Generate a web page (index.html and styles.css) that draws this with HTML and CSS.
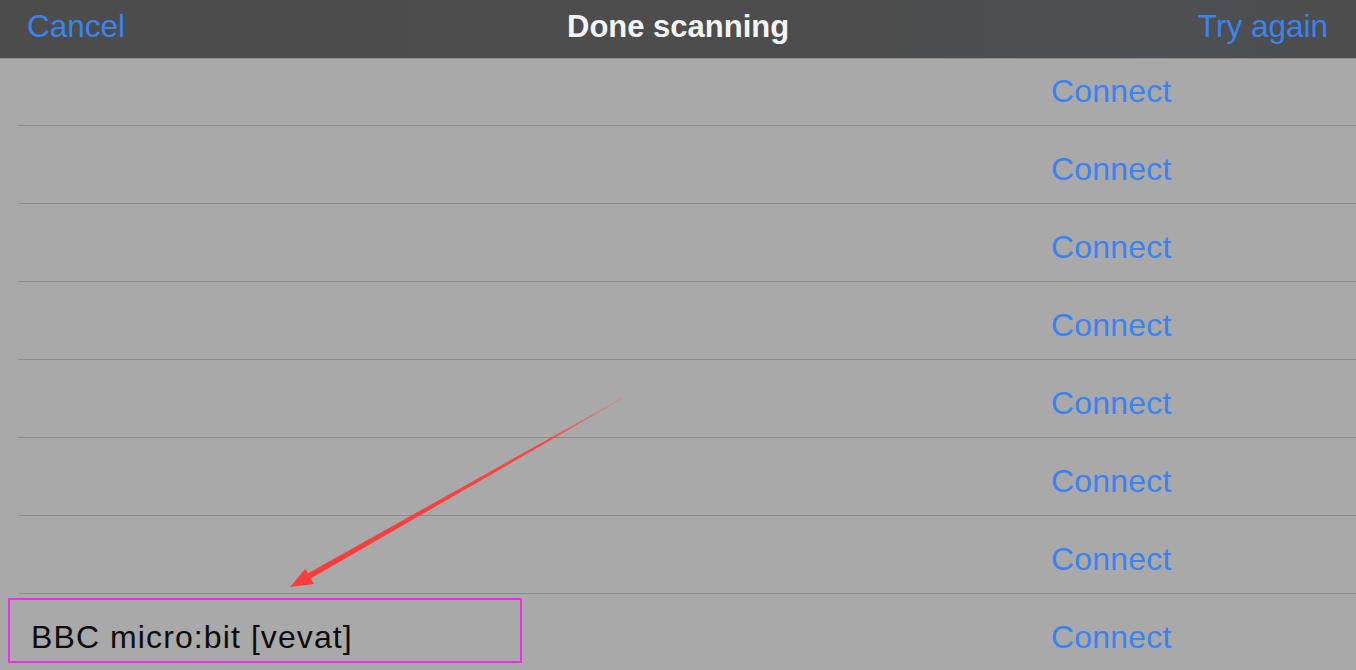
FILE: index.html
```html
<!DOCTYPE html>
<html lang="en">
<head>
<meta charset="utf-8">
<title>Done scanning</title>
<link rel="stylesheet" href="styles.css">
</head>
<body>
<div class="screen">
  <header class="navbar">
    <span class="nav-btn nav-left">Cancel</span>
    <span class="nav-title">Done scanning</span>
    <span class="nav-btn nav-right">Try again</span>
  </header>
  <main class="list">
    <div class="list-inner">
      <div class="row"><div class="row-body"><span class="name"></span><span class="connect">Connect</span></div></div>
      <div class="row"><div class="row-body"><span class="name"></span><span class="connect">Connect</span></div></div>
      <div class="row"><div class="row-body"><span class="name"></span><span class="connect">Connect</span></div></div>
      <div class="row"><div class="row-body"><span class="name"></span><span class="connect">Connect</span></div></div>
      <div class="row"><div class="row-body"><span class="name"></span><span class="connect">Connect</span></div></div>
      <div class="row"><div class="row-body"><span class="name"></span><span class="connect">Connect</span></div></div>
      <div class="row"><div class="row-body"><span class="name"></span><span class="connect">Connect</span></div></div>
      <div class="row"><div class="row-body"><span class="name">BBC micro:bit [vevat]</span><span class="connect">Connect</span></div></div>
    </div>
  </main>
  <div class="highlight"></div>
  <svg class="annot" width="1356" height="670" viewBox="0 0 1356 670">
    <defs>
      <linearGradient id="fade" gradientUnits="userSpaceOnUse" x1="624" y1="398" x2="290" y2="587">
        <stop offset="0" stop-color="#ff3b3b" stop-opacity="0.15"/>
        <stop offset="0.25" stop-color="#ff3b3b" stop-opacity="0.9"/>
        <stop offset="1" stop-color="#ff3b3b" stop-opacity="1"/>
      </linearGradient>
    </defs>
    <polygon fill="url(#fade)" points="290,587 314,584 310.6,578.6 623.3,398.3 622.7,397.5 307.6,573.4 305.5,568.6"/>
  </svg>
</div>
</body>
</html>
```

FILE: styles.css
```css
html, body {
  margin: 0;
  padding: 0;
}
body {
  width: 1356px;
  height: 670px;
  overflow: hidden;
  background: #a9a9a9;
  font-family: "Liberation Sans", Arial, sans-serif;
}
.screen {
  position: relative;
  width: 1356px;
  height: 670px;
  overflow: hidden;
  display: flex;
  flex-direction: column;
}
.navbar {
  box-sizing: border-box;
  height: 59px;
  flex: 0 0 59px;
  background: linear-gradient(90deg, #4c4c4c 0%, #4d4d4d 60%, #4e5053 85%, #4d4d4d 100%);
  border-bottom: 1px solid #8f8f8f;
  display: flex;
  align-items: center;
  justify-content: space-between;
  padding: 0 28px 6px 27px;
  position: relative;
  z-index: 2;
}
.nav-btn {
  color: #3b82f2;
  font-size: 31.5px;
}
.nav-title {
  color: #f4f4f4;
  font-size: 31px;
  font-weight: bold;
  position: absolute;
  left: 567px;
  top: 9px;
}
.list {
  flex: 1;
  overflow: hidden;
}
.list-inner {
  margin-top: -11px;
}
.row {
  height: 78px;
}
.row-body {
  margin-left: 18px;
  border-bottom: 1px solid #8c8c8c;
  display: grid;
  grid-template-columns: 1fr 305px;
  align-items: center;
  padding-top: 8px;
  box-sizing: border-box;
  height: 78px;
}
.name {
  padding-left: 13px;
  color: #0d0d0d;
  font-size: 32px;
  letter-spacing: 1.1px;
  line-height: 1;
}
.connect {
  color: #3b82f2;
  font-size: 32px;
  line-height: 1;
  letter-spacing: 0.2px;
}
.highlight {
  position: absolute;
  left: 8px;
  top: 598px;
  width: 510px;
  height: 61px;
  border: 2px solid #f02ef0;
}
.annot {
  position: absolute;
  left: 0;
  top: 0;
  pointer-events: none;
}
```
